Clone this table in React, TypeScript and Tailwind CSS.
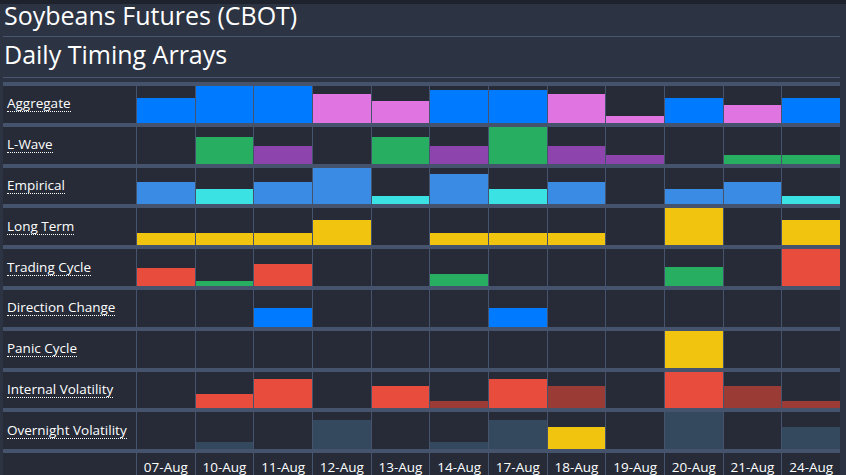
import React from "react"

type Bar = { c: string; h: number } | null

const C = {
  blue: "bg-[#007bff]",
  pink: "bg-[#e074e0]",
  green: "bg-[#27ae60]",
  purple: "bg-[#8e44ad]",
  sky: "bg-[#3a8be4]",
  cyan: "bg-[#3be2e4]",
  yellow: "bg-[#f1c40f]",
  red: "bg-[#e74c3c]",
  maroon: "bg-[#9a3b36]",
  slate: "bg-[#34495e]",
}

const dates = ["07-Aug", "10-Aug", "11-Aug", "12-Aug", "13-Aug", "14-Aug", "17-Aug", "18-Aug", "19-Aug", "20-Aug", "21-Aug", "24-Aug"]

const b = (c: string, h: number): Bar => ({ c, h })

// bar heights in px, cell is ~37px tall
const rows: { label: string; bars: Bar[] }[] = [
  {
    label: "Aggregate",
    bars: [b(C.blue, 25), b(C.blue, 37), b(C.blue, 37), b(C.pink, 29), b(C.pink, 22), b(C.blue, 33), b(C.blue, 33), b(C.pink, 29), b(C.pink, 7), b(C.blue, 25), b(C.pink, 18), b(C.blue, 25)],
  },
  {
    label: "L-Wave",
    bars: [null, b(C.green, 27), b(C.purple, 18), null, b(C.green, 27), b(C.purple, 18), b(C.green, 37), b(C.purple, 18), b(C.purple, 9), null, b(C.green, 9), b(C.green, 9)],
  },
  {
    label: "Empirical",
    bars: [b(C.sky, 22), b(C.cyan, 15), b(C.sky, 22), b(C.sky, 37), b(C.cyan, 8), b(C.sky, 30), b(C.cyan, 15), b(C.sky, 22), null, b(C.sky, 15), b(C.sky, 22), b(C.cyan, 8)],
  },
  {
    label: "Long Term",
    bars: [b(C.yellow, 12), b(C.yellow, 12), b(C.yellow, 12), b(C.yellow, 25), null, b(C.yellow, 12), b(C.yellow, 12), b(C.yellow, 12), null, b(C.yellow, 37), null, b(C.yellow, 25)],
  },
  {
    label: "Trading Cycle",
    bars: [b(C.red, 18), b(C.green, 5), b(C.red, 22), null, null, b(C.green, 12), null, null, null, b(C.green, 19), null, b(C.red, 37)],
  },
  {
    label: "Direction Change",
    bars: [null, null, b(C.blue, 19), null, null, null, b(C.blue, 19), null, null, null, null, null],
  },
  {
    label: "Panic Cycle",
    bars: [null, null, null, null, null, null, null, null, null, b(C.yellow, 37), null, null],
  },
  {
    label: "Internal Volatility",
    bars: [null, b(C.red, 14), b(C.red, 29), null, b(C.red, 22), b(C.maroon, 7), b(C.red, 29), b(C.maroon, 22), null, b(C.red, 37), b(C.maroon, 22), b(C.maroon, 7)],
  },
  {
    label: "Overnight Volatility",
    bars: [null, b(C.slate, 7), null, b(C.slate, 29), null, b(C.slate, 7), b(C.slate, 29), b(C.yellow, 22), null, b(C.slate, 37), null, b(C.slate, 22)],
  },
]

const grid = "grid grid-cols-[133px_repeat(12,minmax(0,1fr))] gap-x-px"

export default function App() {
  return (
    <div className="w-[846px] h-[475px] overflow-hidden bg-[#2c3343] text-white font-['Open_Sans','Liberation_Sans',sans-serif]">
      <div className="h-1 bg-[#1e222c]" />
      <div className="pl-[3px] pr-[6px]">
        <div className="h-[33px] border-b border-[#4a5670] pl-px text-[25px] leading-[23px]">Soybeans Futures (CBOT)</div>
        <div className="h-[41px] border-b border-[#4a5670] pl-px pt-[3px] text-[25px] leading-[28px]">Daily Timing Arrays</div>

        <div className="mt-1 flex flex-col gap-1 bg-[#45536c] pt-1">
          {rows.map((row) => (
            <div key={row.label} className={`${grid} h-[36.8px]`}>
              <div className="flex items-center bg-[#262b37] pl-1">
                <span className="border-b border-dotted border-white text-[13.5px] leading-[16px] -mt-[1px]">{row.label}</span>
              </div>
              {row.bars.map((bar, i) => (
                <div key={i} className="flex flex-col justify-end bg-[#262b37]">
                  {bar && <div className={bar.c} style={{ height: Math.min(bar.h, 36.8) }} />}
                </div>
              ))}
            </div>
          ))}
          <div className={`${grid} h-[30px]`}>
            <div className="bg-[#262b37]" />
            {dates.map((d) => (
              <div key={d} className="bg-[#262b37] pt-[6px] text-center text-[13.5px] leading-[16px]">
                {d}
              </div>
            ))}
          </div>
        </div>
      </div>
    </div>
  )
}
